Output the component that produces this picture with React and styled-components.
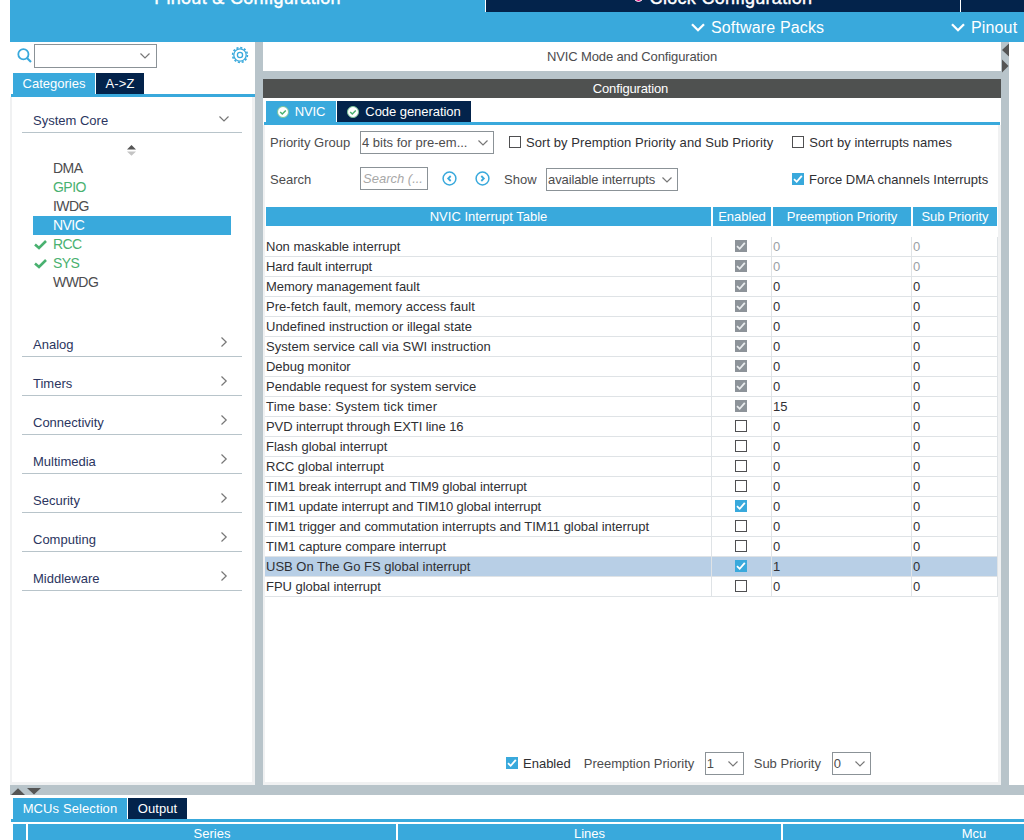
import React from 'react';
import styled, { createGlobalStyle, css } from 'styled-components';

const categories = ['Analog', 'Timers', 'Connectivity', 'Multimedia', 'Security', 'Computing', 'Middleware'];

const peripherals = [
  { name: 'DMA' },
  { name: 'GPIO', green: true },
  { name: 'IWDG' },
  { name: 'NVIC', selected: true },
  { name: 'RCC', green: true, check: true },
  { name: 'SYS', green: true, check: true },
  { name: 'WWDG' },
];

const interrupts = [
  { name: 'Non maskable interrupt', state: 'locked', pre: 0, sub: 0, dim: true },
  { name: 'Hard fault interrupt', state: 'locked', pre: 0, sub: 0, dim: true, ls: -0.08 },
  { name: 'Memory management fault', state: 'locked', pre: 0, sub: 0, ls: -0.04 },
  { name: 'Pre-fetch fault, memory access fault', state: 'locked', pre: 0, sub: 0, ls: 0.04 },
  { name: 'Undefined instruction or illegal state', state: 'locked', pre: 0, sub: 0 },
  { name: 'System service call via SWI instruction', state: 'locked', pre: 0, sub: 0, ls: 0.06 },
  { name: 'Debug monitor', state: 'locked', pre: 0, sub: 0, ls: -0.05 },
  { name: 'Pendable request for system service', state: 'locked', pre: 0, sub: 0 },
  { name: 'Time base: System tick timer', state: 'locked', pre: 15, sub: 0, ls: 0.17 },
  { name: 'PVD interrupt through EXTI line 16', state: 'off', pre: 0, sub: 0, ls: -0.08 },
  { name: 'Flash global interrupt', state: 'off', pre: 0, sub: 0 },
  { name: 'RCC global interrupt', state: 'off', pre: 0, sub: 0 },
  { name: 'TIM1 break interrupt and TIM9 global interrupt', state: 'off', pre: 0, sub: 0, ls: -0.09 },
  { name: 'TIM1 update interrupt and TIM10 global interrupt', state: 'on', pre: 0, sub: 0, ls: -0.09 },
  { name: 'TIM1 trigger and commutation interrupts and TIM11 global interrupt', state: 'off', pre: 0, sub: 0, ls: -0.035 },
  { name: 'TIM1 capture compare interrupt', state: 'off', pre: 0, sub: 0, ls: -0.07 },
  { name: 'USB On The Go FS global interrupt', state: 'on', pre: 1, sub: 0, selected: true },
  { name: 'FPU global interrupt', state: 'off', pre: 0, sub: 0, ls: -0.04 },
];

const Chevron = ({ right, bold }) => {
  if (bold) {
    return (
      <svg width="14" height="9" viewBox="0 0 14 9" fill="none" stroke="#fff" strokeWidth="2.3">
        <path d="M1 1.2L7 7.2L13 1.2" />
      </svg>
    );
  }
  return right ? (
    <svg width="8" height="10" viewBox="0 0 8 10" fill="none" stroke="#777" strokeWidth="1.2">
      <path d="M0.5 0.5L5.2 5L0.5 9.5" />
    </svg>
  ) : (
    <svg width="10" height="6" viewBox="0 0 10 6" fill="none" stroke="#777" strokeWidth="1.2">
      <path d="M0.5 0.5L5 5L9.5 0.5" />
    </svg>
  );
};

const Check = ({ state }) => (
  <Box $state={state}>
    {state !== 'off' && (
      <svg width="12" height="12" viewBox="0 0 12 12" fill="none" stroke={state === 'on' ? '#fff' : '#e9ecee'} strokeWidth="1.8">
        <path d="M2 6.2L4.7 8.8L9.8 2.8" />
      </svg>
    )}
  </Box>
);

const Badge = () => (
  <svg width="12" height="12" viewBox="0 0 12 12" fill="none">
    <circle cx="6" cy="6" r="5.5" fill="#fff" stroke="#7cc79a" />
    <path d="M3.2 6L5.3 8L8.8 4.4" stroke="#49b170" strokeWidth="1.5" />
  </svg>
);

const Arrow = ({ next }) => (
  <svg width="15" height="15" viewBox="0 0 15 15" fill="none" stroke="#39a9dc">
    <circle cx="7.5" cy="7.5" r="6.4" strokeWidth="1.5" />
    <path d={next ? 'M6.3 5L8.8 7.5L6.3 10' : 'M8.7 5L6.2 7.5L8.7 10'} strokeWidth="1.8" />
  </svg>
);

const Gear = () => (
  <svg width="18" height="18" viewBox="0 0 18 18" fill="none" stroke="#39a9dc">
    <circle cx="9" cy="9" r="7.4" strokeWidth="1.6" strokeDasharray="2.1 1.774" />
    <circle cx="9" cy="9" r="6.2" strokeWidth="1.3" />
    <circle cx="9" cy="9" r="2.6" strokeWidth="1.3" />
  </svg>
);

const App = () => (
  <Page>
    <GlobalStyle />
    <Header>
      <MainTabs>
        <MainTab $w={475} $active>Pinout &amp; Configuration</MainTab>
        <MainTab $w={474}><Dot />Clock Configuration</MainTab>
        <MainTab $w={63} />
      </MainTabs>
      <SubMenu>
        <MenuItem $w={260}><Chevron bold />Software Packs</MenuItem>
        <MenuItem><Chevron bold />Pinout</MenuItem>
      </SubMenu>
    </Header>

    <Middle>
      <Sidebar>
        <SearchRow>
          <svg width="15" height="15" viewBox="0 0 15 15" fill="none" stroke="#39a9dc" strokeWidth="1.8">
            <circle cx="6.4" cy="6.2" r="5.1" />
            <path d="M10 10L14 14" strokeWidth="2.2" />
          </svg>
          <Combo $w={123} $h={24} $pad={6}><span /><Chevron /></Combo>
          <GearSlot><Gear /></GearSlot>
        </SearchRow>
        <Tabs>
          <Tab $active $w={82} $ls={0}>Categories</Tab>
          <Tab $w={48} $ls={0.1}>A-&gt;Z</Tab>
        </Tabs>
        <SideBody>
          <Category $first>System Core<Chevron /></Category>
          <SortIcon>
            <svg width="9" height="11" viewBox="0 0 9 11">
              <path d="M4.5 0L9 4.6H0Z" fill="#555" />
              <path d="M0 6.4H9L4.5 10.8Z" fill="#c4c4c4" />
            </svg>
          </SortIcon>
          <List>
            {peripherals.map((p) => (
              <Item key={p.name} $green={p.green} $selected={p.selected}>
                <Mark>
                  {p.check && (
                    <svg width="13" height="10" viewBox="0 0 13 10" fill="none" stroke="#49b170" strokeWidth="2.6">
                      <path d="M1 4.5L5 8L12 1" />
                    </svg>
                  )}
                </Mark>
                {p.name}
              </Item>
            ))}
          </List>
          {categories.map((name) => (
            <Category key={name}>{name}<Chevron right /></Category>
          ))}
        </SideBody>
      </Sidebar>

      <Main>
        <ModeTitle>NVIC Mode and Configuration</ModeTitle>
        <ConfigTitle>Configuration</ConfigTitle>
        <ConfigTabs>
          <Tab $active $w={70} $ls={-0.2}><Badge />NVIC</Tab>
          <Tab $w={134} $ls={-0.05}><Badge />Code generation</Tab>
        </ConfigTabs>
        <Config>
          <Options>
            <Label $w={90}>Priority Group</Label>
            <Combo $w={134}>4 bits for pre-em...<Chevron /></Combo>
            <CheckLabel $ml={15} $ls={0.07}><Check state="off" />Sort by Premption Priority and Sub Priority</CheckLabel>
            <CheckLabel $ml={19} $ls={0.05}><Check state="off" />Sort by interrupts names</CheckLabel>
          </Options>
          <Options $second>
            <Label $w={90}>Search</Label>
            <SearchInput>Search (...</SearchInput>
            <Arrows><Arrow /><Arrow next /></Arrows>
            <Label $w={42}>Show</Label>
            <Combo $w={132} $ls={-0.1} $pad={5}>available interrupts<Chevron /></Combo>
            <CheckLabel $ml={114}><Check state="on" />Force DMA channels Interrupts</CheckLabel>
          </Options>
          <TableHead>
            <div>NVIC Interrupt Table</div>
            <div>Enabled</div>
            <div>Preemption Priority</div>
            <div>Sub Priority</div>
          </TableHead>
          {interrupts.map((row) => (
            <Row key={row.name} $selected={row.selected}>
              <Cell $ls={row.ls}>{row.name}</Cell>
              <CheckCell><Check state={row.state} /></CheckCell>
              <Cell $dim={row.dim}>{row.pre}</Cell>
              <Cell $dim={row.dim}>{row.sub}</Cell>
            </Row>
          ))}
          <Footer>
            <CheckLabel $ml={0}><Check state="on" />Enabled</CheckLabel>
            <Label $ml={13} $w={121}>Preemption Priority</Label>
            <Combo $w={39} $pad={5}>1<Chevron /></Combo>
            <Label $ml={10} $w={78}>Sub Priority</Label>
            <Combo $w={39} $pad={5}>0<Chevron /></Combo>
          </Footer>
        </Config>
      </Main>

      <Divider>
        <svg width="8" height="32" viewBox="0 0 8 32" fill="#555">
          <path d="M8 1.5V14.5L1 8Z" />
          <path d="M1 17.5V30.5L7.5 24Z" />
        </svg>
      </Divider>
    </Middle>

    <Splitter>
      <svg width="32" height="10" viewBox="0 0 32 10" fill="#555">
        <path d="M1 10L8 3.2L15 10Z" />
        <path d="M17 3H31L24 9.6Z" />
      </svg>
    </Splitter>

    <Bottom>
      <Tabs>
        <Tab $active $w={114} $ls={0.1}>MCUs Selection</Tab>
        <Tab $w={59} $ls={0.05}>Output</Tab>
      </Tabs>
      <BottomHead>
        <div />
        <div>Series</div>
        <div>Lines</div>
        <div>Mcu</div>
      </BottomHead>
    </Bottom>
  </Page>
);

const GlobalStyle = createGlobalStyle`
  * {
    box-sizing: border-box;
  }

  body {
    margin: 0;
    background: #fff;
  }

  svg {
    flex: none;
    display: block;
  }
`;

const Page = styled.div`
  width: 1024px;
  height: 840px;
  padding-left: 10px;
  overflow: hidden;
  display: flex;
  flex-direction: column;
  background: #fff;
  color: #4c4c4e;
  font: 13px/19px 'Liberation Sans', Arial, sans-serif;
  white-space: nowrap;
`;

const Header = styled.div`
  flex: none;
  height: 42px;
  background: #39a9dc;
  color: #fff;
  overflow: hidden;
`;

const MainTabs = styled.div`
  display: flex;
  gap: 1px;
  height: 12px;
  background: #fff;
`;

const MainTab = styled.div`
  display: flex;
  flex: none;
  justify-content: center;
  align-items: flex-end;
  gap: 7px;
  width: ${(p) => p.$w}px;
  height: 12px;
  background: ${(p) => (p.$active ? '#39a9dc' : '#03234b')};
  font-size: 18px;
  line-height: 28px;
  letter-spacing: 0.3px;
  -webkit-text-stroke: 0.4px #fff;
`;

const Dot = styled.i`
  width: 9px;
  height: 9px;
  margin-bottom: 10px;
  border-radius: 50%;
  border: 1px solid #fff;
  background: #e6007e;
`;

const SubMenu = styled.div`
  display: flex;
  height: 30px;
  padding: 1px 0 0 681px;
  font-size: 16px;
  line-height: 30px;
`;

const MenuItem = styled.div`
  display: flex;
  flex: none;
  align-items: center;
  gap: 6px;
  width: ${(p) => (p.$w ? `${p.$w}px` : 'auto')};
  letter-spacing: 0.15px;
`;

const Middle = styled.div`
  display: flex;
  flex: none;
  height: 743px;
`;

const Sidebar = styled.div`
  display: flex;
  flex-direction: column;
  width: 245px;
`;

const SearchRow = styled.div`
  display: flex;
  align-items: center;
  height: 31px;
  padding: 0 6px 4px 7px;
  gap: 2px;
`;

const GearSlot = styled.div`
  margin-left: auto;
  padding-bottom: 2px;
`;

const Combo = styled.div`
  display: flex;
  flex: none;
  align-items: center;
  justify-content: space-between;
  width: ${(p) => p.$w}px;
  height: ${(p) => p.$h || 23}px;
  padding: 0 ${(p) => p.$pad || 5}px 0 1px;
  border: 1px solid #8b9297;
  letter-spacing: ${(p) => p.$ls || 0}px;
`;

const Tabs = styled.div`
  display: flex;
  flex: none;
  gap: 1px;
  height: 24px;
  margin-left: 1px;
  padding-left: 2px;
  border-bottom: 3px solid #39a9dc;
`;

const Tab = styled.div`
  display: flex;
  flex: none;
  align-items: center;
  justify-content: center;
  gap: 6px;
  width: ${(p) => p.$w}px;
  height: 21px;
  background: ${(p) => (p.$active ? '#39a9dc' : '#03234b')};
  color: #fff;
  letter-spacing: ${(p) => p.$ls}px;
`;

const SideBody = styled.div`
  flex: 1;
  padding: 0 10px;
  border: solid #f0f1f2;
  border-width: 0 3px 3px 2px;
`;

const Category = styled.div`
  display: flex;
  justify-content: space-between;
  width: 220px;
  height: ${(p) => (p.$first ? 36 : 39)}px;
  padding: ${(p) => (p.$first ? 14 : 17)}px 13px 0 11px;
  border-bottom: 1px solid #b8c4ca;
  color: #2b3560;

  svg {
    margin-top: ${(p) => (p.$first ? 5 : 2)}px;
  }
`;

const SortIcon = styled.div`
  display: flex;
  justify-content: center;
  height: 26px;
  padding: 12px 2px 0 0;
`;

const List = styled.div`
  height: 159px;
`;

const Item = styled.div`
  display: flex;
  align-items: center;
  width: 198px;
  height: 19px;
  margin-left: 11px;
  font-size: 14px;
  letter-spacing: -0.55px;
  color: ${(p) => (p.$green ? '#49b170' : '#4c4c4e')};

  ${(p) => p.$selected && css`
    background: #39a9dc;
    color: #fff;
  `}
`;

const Mark = styled.span`
  width: 20px;
  padding-left: 1px;
`;

const Main = styled.div`
  display: flex;
  flex-direction: column;
  flex: none;
  width: 746px;
  border-left: 8px solid #b8c4ca;
`;

const ModeTitle = styled.div`
  height: 37px;
  border-bottom: 8px solid #b8c4ca;
  line-height: 29px;
  letter-spacing: -0.12px;
  text-align: center;
`;

const ConfigTitle = styled.div`
  height: 19px;
  padding-right: 3px;
  background: #4f5150;
  color: #fff;
  letter-spacing: -0.15px;
  text-align: center;
`;

const ConfigTabs = styled(Tabs)`
  height: 27px;
  margin: 0 1px;
  padding-top: 3px;
`;

const Config = styled.div`
  display: flex;
  flex-direction: column;
  flex: 1;
  border: solid #f0f1f2;
  border-width: 0 3px 3px 2px;
`;

const Options = styled.div`
  display: flex;
  align-items: center;
  height: ${(p) => (p.$second ? 39 : 35)}px;
  padding-left: 5px;
`;

const Label = styled.div`
  flex: none;
  width: ${(p) => p.$w}px;
  margin-left: ${(p) => p.$ml || 0}px;
`;

const Box = styled.span`
  display: block;
  flex: none;
  width: 12px;
  height: 12px;
  ${(p) => p.$state === 'off' && 'border: 1px solid #4f4f51;'}
  ${(p) => p.$state === 'on' && 'background: #39a9dc;'}
  ${(p) => p.$state === 'locked' && 'background: #8d9399;'}
`;

const CheckLabel = styled.div`
  display: flex;
  gap: 5px;
  margin-left: ${(p) => p.$ml}px;
  color: #2f2f33;
  letter-spacing: ${(p) => p.$ls || 0}px;

  ${Box} {
    margin-top: 3px;
  }
`;

const SearchInput = styled.div`
  width: 68px;
  height: 23px;
  margin-bottom: 2px;
  padding-left: 2px;
  border: 1px solid #8b9297;
  line-height: 21px;
  color: #a8a8a8;
  font-style: italic;
`;

const Arrows = styled.div`
  display: flex;
  gap: 18px;
  padding: 0 14px 3px 14px;
`;

const TableHead = styled.div`
  display: grid;
  grid-template-columns: 445px 58px 138px 84px;
  gap: 2px;
  height: 30px;
  margin: 8px 0 0 1px;

  div {
    height: 19px;
    background: #39a9dc;
    color: #fff;
    text-align: center;
  }
`;

const Row = styled.div`
  display: grid;
  grid-template-columns: 447px 60px 140px 86px;
  height: 20px;
  background: ${(p) => (p.$selected ? '#b8cfe6' : '#fff')};
`;

const Cell = styled.div`
  padding-left: 1px;
  border: solid #dfe3e6;
  border-width: 0 1px 1px 0;
  color: ${(p) => (p.$dim ? '#9a9fa5' : '#2f2f33')};
  letter-spacing: ${(p) => p.$ls || 0}px;
`;

const CheckCell = styled(Cell)`
  padding: 3px 0 0 23px;
`;

const Footer = styled.div`
  display: flex;
  align-items: center;
  height: 23px;
  margin: auto 0 7px 241px;
`;

const Divider = styled.div`
  width: 8px;
  background: #b8c4ca;
`;

const Splitter = styled.div`
  flex: none;
  height: 10px;
  background: #b8c4ca;
`;

const Bottom = styled.div`
  padding-top: 3px;
`;

const BottomHead = styled.div`
  display: grid;
  grid-template-columns: 13px 368px 383px 382px;
  gap: 2px;
  padding: 2px 0 0 3px;

  div {
    height: 19px;
    background: #39a9dc;
    color: #fff;
    text-align: center;
  }
`;

export default App;
